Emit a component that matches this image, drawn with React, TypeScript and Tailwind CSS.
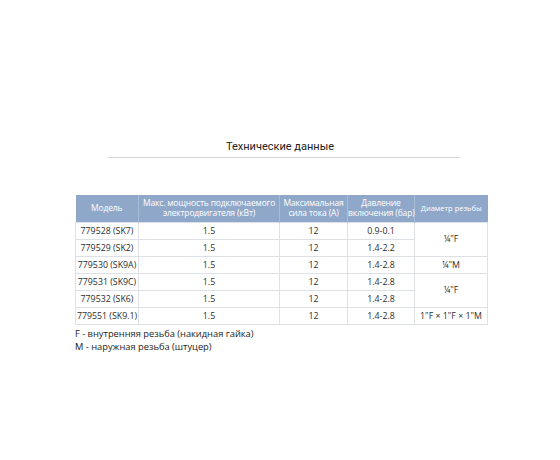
export default function App() {
  const rows = [
    { m: "779528 (SK7)", p: "1.5", a: "12", b: "0.9-0.1" },
    { m: "779529 (SK2)", p: "1.5", a: "12", b: "1.4-2.2" },
    { m: "779530 (SK9A)", p: "1.5", a: "12", b: "1.4-2.8" },
    { m: "779531 (SK9C)", p: "1.5", a: "12", b: "1.4-2.8" },
    { m: "779532 (SK6)", p: "1.5", a: "12", b: "1.4-2.8" },
    { m: "779551 (SK9.1)", p: "1.5", a: "12", b: "1.4-2.8" },
  ];
  const diam: Record<number, { t: string; span: number }> = {
    0: { t: "¼\"F", span: 2 },
    2: { t: "¼\"M", span: 1 },
    3: { t: "¼\"F", span: 2 },
    5: { t: "1\"F × 1\"F × 1\"M", span: 1 },
  };
  const td = "border border-[#dde1e6] text-center align-middle h-[17px] p-0 leading-[10px] whitespace-nowrap";
  const th = "font-normal leading-[10px] border-r border-[#a9bcd6] p-0 whitespace-nowrap tracking-[-0.15px]";
  return (
    <div className="w-[560px] h-[460px] bg-white relative" style={{ fontFamily: "'Open Sans', sans-serif" }}>
      <div className="pt-[140px] flex flex-col items-center">
        <div className="text-[11px] text-[#222] leading-[14px]" style={{ fontFamily: "Roboto, sans-serif" }}>
          Технические данные
        </div>
        <div className="mt-[3px] w-[352px] ml-[8px] h-px bg-[#d4d4d4]" />
      </div>
      <div className="pl-[75px] pt-[37px]">
        <table className="border-collapse table-fixed w-[412px] text-[8.8px] text-[#2d2d2d]">
          <colgroup>
            <col className="w-[63px]" />
            <col className="w-[141px]" />
            <col className="w-[68px]" />
            <col className="w-[67px]" />
            <col className="w-[73px]" />
          </colgroup>
          <thead>
            <tr className="bg-[#8fa7c9] text-white h-[27px] text-[8.5px]">
              <th className={th}>Модель</th>
              <th className={th}>
                Макс. мощность подключаемого<br />электродвигателя (кВт)
              </th>
              <th className={th}>
                Максимальная<br />сила тока (А)
              </th>
              <th className={th}>
                Давление<br />включения (бар)
              </th>
              <th className="font-normal leading-[10px] p-0 text-[7.5px] whitespace-nowrap">Диаметр резьбы</th>
            </tr>
          </thead>
          <tbody>
            {rows.map((r, i) => (
              <tr key={i}>
                <td className={td}>{r.m}</td>
                <td className={td}>{r.p}</td>
                <td className={td}>{r.a}</td>
                <td className={td}>{r.b}</td>
                {diam[i] && (
                  <td className={td} rowSpan={diam[i].span}>
                    {diam[i].t}
                  </td>
                )}
              </tr>
            ))}
          </tbody>
        </table>
        <div className="mt-[2px] text-[9.3px] leading-[13px] text-[#222]">
          <div>F - внутренняя резьба (накидная гайка)</div>
          <div>M - наружная резьба (штуцер)</div>
        </div>
      </div>
    </div>
  );
}
